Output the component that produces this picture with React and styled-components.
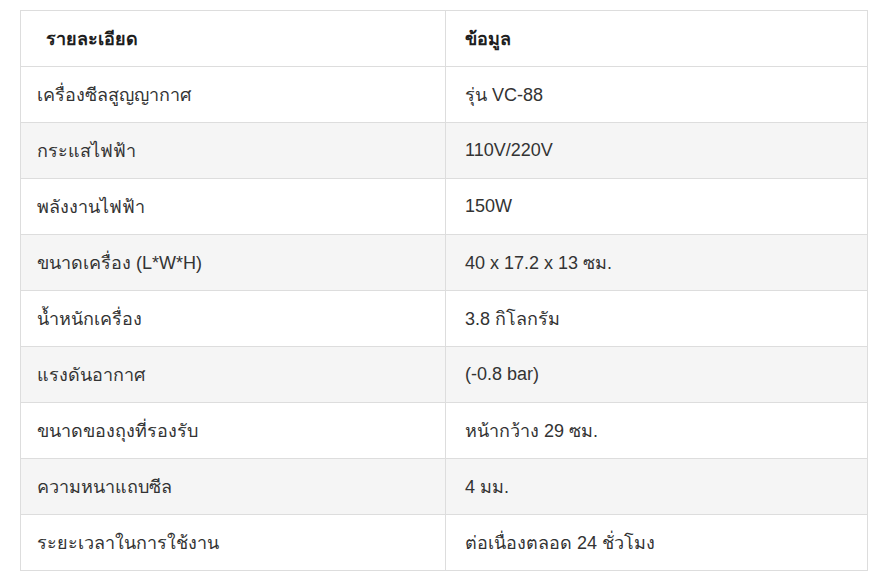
import React from "react";
import styled, { createGlobalStyle } from "styled-components";

const GlobalStyle = createGlobalStyle`
  html, body {
    margin: 0;
    padding: 0;
    background: #ffffff;
  }
  body {
    font-family: "Liberation Sans", "DejaVu Sans", Arial, sans-serif;
    color: #333333;
  }
`;

const Page = styled.div`
  padding: 10px 12px 0 20px;
`;

const SpecTable = styled.table`
  width: 847px;
  border-collapse: collapse;
  table-layout: fixed;
  font-size: 18px;
`;

const Col = styled.col`
  width: ${(p) => p.$width};
`;

const HeadCell = styled.th`
  box-sizing: border-box;
  height: 56px;
  padding: 0 16px 0 ${(p) => (p.$indent ? "25px" : "19px")};
  border: 1px solid #dddddd;
  text-align: left;
  font-weight: bold;
  color: #1e1e1e;
`;

const Row = styled.tr`
  background: ${(p) => (p.$striped ? "#f5f5f5" : "#ffffff")};
`;

const Cell = styled.td`
  box-sizing: border-box;
  height: 56px;
  padding: 0 16px 0 ${(p) => (p.$right ? "19px" : "16px")};
  border: 1px solid #dddddd;
  vertical-align: middle;
`;

const specs = [
  ["เครื่องซีลสูญญากาศ", "รุ่น VC-88"],
  ["กระแสไฟฟ้า", "110V/220V"],
  ["พลังงานไฟฟ้า", "150W"],
  ["ขนาดเครื่อง (L*W*H)", "40 x 17.2 x 13 ซม."],
  ["น้ำหนักเครื่อง", "3.8 กิโลกรัม"],
  ["แรงดันอากาศ", "(-0.8 bar)"],
  ["ขนาดของถุงที่รองรับ", "หน้ากว้าง 29 ซม."],
  ["ความหนาแถบซีล", "4 มม."],
  ["ระยะเวลาในการใช้งาน", "ต่อเนื่องตลอด 24 ชั่วโมง"],
];

export default function App() {
  return (
    <Page>
      <GlobalStyle />
      <SpecTable>
        <colgroup>
          <Col $width="425px" />
          <Col $width="422px" />
        </colgroup>
        <thead>
          <tr>
            <HeadCell $indent>รายละเอียด</HeadCell>
            <HeadCell>ข้อมูล</HeadCell>
          </tr>
        </thead>
        <tbody>
          {specs.map((row, i) => (
            <Row key={i} $striped={i % 2 === 1}>
              <Cell>{row[0]}</Cell>
              <Cell $right>{row[1]}</Cell>
            </Row>
          ))}
        </tbody>
      </SpecTable>
    </Page>
  );
}
